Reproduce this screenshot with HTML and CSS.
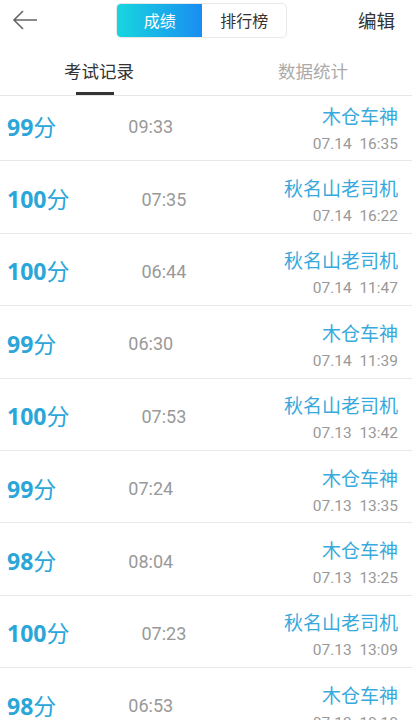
FILE: index.html
```html
<!DOCTYPE html>
<html lang="zh-CN">
<head>
    <meta charset="UTF-8">
    <meta name="viewport" content="width=device-width, initial-scale=1.0">
    <title>成绩</title>
    <link rel="stylesheet" href="styles.css">
</head>
<body>

    <!-- Top bar -->
    <div class="topbar">
        <a class="back" href="#">
            <svg width="26" height="20" viewBox="0 0 26 20">
                <path d="M25 10H2M11 1L2 10l9 9" fill="none" stroke="#666" stroke-width="1.6"/>
            </svg>
        </a>
        <div class="switch">
            <span class="switch-item active">成绩</span>
            <span class="switch-item">排行榜</span>
        </div>
        <a class="edit" href="#">编辑</a>
    </div>

    <!-- Tabs -->
    <div class="tabs">
        <div class="tab current">考试记录</div>
        <div class="tab">数据统计</div>
    </div>

    <!-- Records -->
    <div class="records">
        <div class="record-list">
            <div class="record">
                <div class="score"><b>99</b>分</div>
                <div class="time">09:33</div>
                <div class="info">
                    <div class="name">木仓车神</div>
                    <div class="date">07.14&nbsp;&nbsp;16:35</div>
                </div>
            </div>
            <div class="record">
                <div class="score"><b>100</b>分</div>
                <div class="time">07:35</div>
                <div class="info">
                    <div class="name">秋名山老司机</div>
                    <div class="date">07.14&nbsp;&nbsp;16:22</div>
                </div>
            </div>
            <div class="record">
                <div class="score"><b>100</b>分</div>
                <div class="time">06:44</div>
                <div class="info">
                    <div class="name">秋名山老司机</div>
                    <div class="date">07.14&nbsp;&nbsp;11:47</div>
                </div>
            </div>
            <div class="record">
                <div class="score"><b>99</b>分</div>
                <div class="time">06:30</div>
                <div class="info">
                    <div class="name">木仓车神</div>
                    <div class="date">07.14&nbsp;&nbsp;11:39</div>
                </div>
            </div>
            <div class="record">
                <div class="score"><b>100</b>分</div>
                <div class="time">07:53</div>
                <div class="info">
                    <div class="name">秋名山老司机</div>
                    <div class="date">07.13&nbsp;&nbsp;13:42</div>
                </div>
            </div>
            <div class="record">
                <div class="score"><b>99</b>分</div>
                <div class="time">07:24</div>
                <div class="info">
                    <div class="name">木仓车神</div>
                    <div class="date">07.13&nbsp;&nbsp;13:35</div>
                </div>
            </div>
            <div class="record">
                <div class="score"><b>98</b>分</div>
                <div class="time">08:04</div>
                <div class="info">
                    <div class="name">木仓车神</div>
                    <div class="date">07.13&nbsp;&nbsp;13:25</div>
                </div>
            </div>
            <div class="record">
                <div class="score"><b>100</b>分</div>
                <div class="time">07:23</div>
                <div class="info">
                    <div class="name">秋名山老司机</div>
                    <div class="date">07.13&nbsp;&nbsp;13:09</div>
                </div>
            </div>
            <div class="record">
                <div class="score"><b>98</b>分</div>
                <div class="time">06:53</div>
                <div class="info">
                    <div class="name">木仓车神</div>
                    <div class="date">07.13&nbsp;&nbsp;10:10</div>
                </div>
            </div>
        </div>
    </div>

</body>
</html>
```

FILE: styles.css
```css
/* Page */
body {
    margin: 0;
    background-color: #fff;
    font-family: Roboto, "Noto Sans CJK SC", sans-serif;
    color: #333;
    height: 720px;
    overflow: hidden;
}

a {
    color: inherit;
    text-decoration: none;
}

/* Top bar */
.topbar {
    height: 40px;
    display: flex;
    align-items: center;
    justify-content: space-between;
    padding: 0 17px 0 12px;
}

.back {
    display: flex;
}

.switch {
    display: flex;
    width: 169px;
    height: 33px;
    margin-left: 8px;
    border: 1px solid #e9e9e9;
    border-radius: 5px;
    overflow: hidden;
}

.switch-item {
    flex: 1;
    display: flex;
    align-items: center;
    justify-content: center;
    font-size: 16px;
    color: #333;
}

.switch-item.active {
    background: linear-gradient(to right, #17d6df, #1a8df1);
    color: #fff;
}

.edit {
    font-size: 18.5px;
    color: #333;
}

/* Tabs */
.tabs {
    display: flex;
    height: 55px;
    border-bottom: 1px solid #e6e6e6;
}

.tab {
    flex: 1;
    display: flex;
    justify-content: center;
    padding-top: 18px;
    font-size: 17.5px;
    color: #aaa;
    position: relative;
}

.tab.current {
    color: #333;
    padding-right: 16px;
}

.tab.current::after {
    content: "";
    position: absolute;
    bottom: 0;
    left: 76px;
    width: 38px;
    height: 3px;
    background-color: #333;
}

/* Record list */
.records {
    overflow: hidden;
}

.record-list {
    margin-top: -7px;
}

.record {
    height: 71.4px;
    display: flex;
    align-items: center;
    padding: 0 14px 0 7px;
    border-bottom: 1px solid #e8e8e8;
}

.score {
    font-size: 23px;
    color: #2aa6d9;
    margin-top: 2px;
}

.score b {
    font-family: "Open Sans", Roboto, sans-serif;
    font-weight: 700;
}

.time {
    margin-left: 72px;
    margin-top: 4px;
    font-size: 18px;
    color: #999;
}

.info {
    margin-left: auto;
    margin-top: 10px;
    text-align: right;
}

.name {
    font-size: 19px;
    color: #38a9dc;
    line-height: 24px;
}

.date {
    font-size: 15.5px;
    color: #999;
    line-height: 20px;
    margin-top: 4px;
}
```
